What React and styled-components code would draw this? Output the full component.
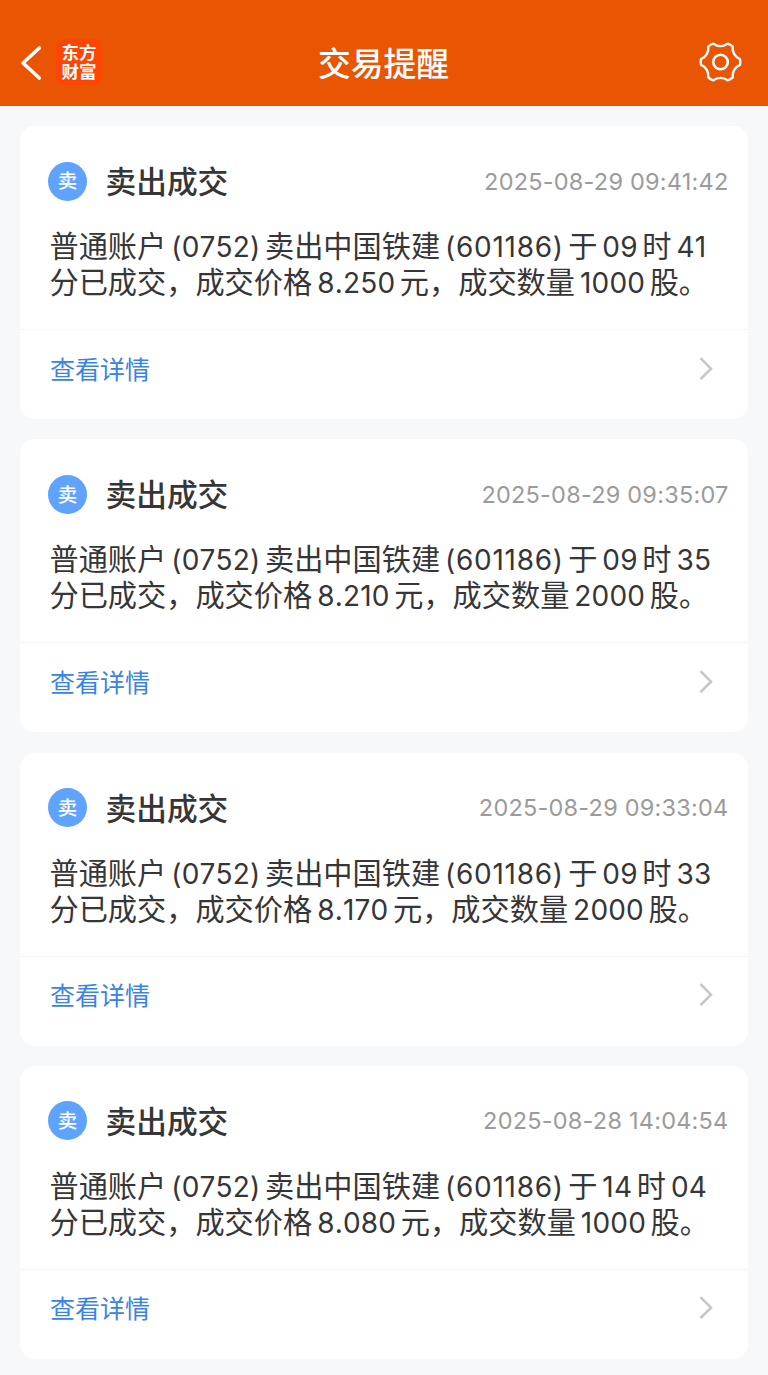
import styled, { createGlobalStyle } from 'styled-components'

const GlobalStyle = createGlobalStyle`
  * {
    box-sizing: border-box;
  }

  body {
    margin: 0;
    background: #f6f8fa;
    font-family: Inter, "Noto Sans CJK SC", sans-serif;
    color: #363636;
  }
`

const Page = styled.div`
  width: 768px;
  height: 1375px;
  overflow: hidden;
`

const Header = styled.header`
  display: grid;
  grid-template-columns: 1fr auto 1fr;
  align-items: center;
  height: 106px;
  padding: 18px 26px 0 20px;
  background: #ea5504;
  color: #fff;
`

const HeaderLeft = styled.div`
  display: flex;
  align-items: center;
  gap: 14px;
`

const Logo = styled.div`
  display: flex;
  flex-direction: column;
  align-items: center;
  justify-content: center;
  width: 46px;
  height: 46px;
  border-radius: 8px;
  background: #ff4403;
  font-size: 17.5px;
  font-weight: 700;
  line-height: 19.5px;
`

const HeaderTitle = styled.h1`
  margin: 0;
  padding: 4px 0 0 5px;
  font-size: 32.8px;
  font-weight: 500;
  line-height: 48px;
`

const IconButton = styled.button`
  display: flex;
  padding: ${(props) => props.$end ? '0' : '2px 0 0'};
  border: 0;
  background: none;
  color: inherit;
  justify-self: ${(props) => props.$end ? 'end' : 'start'};
`

const List = styled.main`
  display: flex;
  flex-direction: column;
  gap: 20.3px;
  padding: 20px;
`

const Card = styled.section`
  height: 293px;
  border-radius: 15px;
  background: #fff;
`

const CardBody = styled.div`
  height: 204px;
  padding: 35px 19.5px 0 28px;
  border-bottom: 1px solid #f6f6f7;
`

const CardHead = styled.div`
  display: flex;
  align-items: center;
  height: 40px;
`

const Badge = styled.span`
  display: flex;
  align-items: center;
  justify-content: center;
  width: 39px;
  height: 39px;
  padding-top: 2px;
  border-radius: 50%;
  background: #5fa3fc;
  color: #fff;
  font-size: 19.5px;
  font-weight: 500;
  line-height: 1;
`

const CardTitle = styled.h2`
  margin: 0 auto 0 18.5px;
  padding-top: 2px;
  font-size: 30.7px;
  font-weight: 500;
  line-height: 40px;
`

const Time = styled.time`
  color: #9b9b9b;
  font-size: 23.5px;
  letter-spacing: 0.22px;
`

const Message = styled.p`
  margin: 28px 0 0 1.5px;
  font-size: 29.2px;
  line-height: 35px;
  white-space: nowrap;
`

const Num = styled.span`
  margin: 0 4.5px 0 5px;
  font-size: 28px;
  letter-spacing: ${(props) => props.$spacing || '0.2px'};
  font-kerning: none;
  font-feature-settings: "calt" 0;
`

const CardLink = styled.a`
  display: flex;
  align-items: center;
  justify-content: space-between;
  height: 75px;
  padding: 0 35px 0 30px;
  color: #3a83e2;
  font-size: 25px;
`

const GEAR_PATH = [0, 60, 120, 180, 240, 300].map((deg, i) => {
  const at = (r, offset) => {
    const a = (deg + offset) * Math.PI / 180
    return `${(r * Math.cos(a)).toFixed(2)} ${(r * Math.sin(a)).toFixed(2)}`
  }
  return `${i === 0 ? 'M' : 'L'}${at(19.7, -8.5)} Q${at(20.2, 0)} ${at(19.7, 8.5)} C${at(15.3, 18.7)} ${at(15.3, 41.3)} ${at(19.7, 51.5)}`
}).join(' ') + 'Z'

const messages = [
  { time: '2025-08-29 09:41:42', hour: '09', minute: '41', price: '8.250', count: '1000' },
  { time: '2025-08-29 09:35:07', hour: '09', minute: '35', price: '8.210', count: '2000' },
  { time: '2025-08-29 09:33:04', hour: '09', minute: '33', price: '8.170', count: '2000' },
  { time: '2025-08-28 14:04:54', hour: '14', minute: '04', price: '8.080', count: '1000' },
]

function BackIcon() {
  return (
    <svg width="22" height="36" viewBox="0 0 22 36" fill="none">
      <path d="M19.3 3L3 18L19.3 33" stroke="#fff" strokeWidth="3.6" strokeLinecap="round" strokeLinejoin="round" />
    </svg>
  )
}

function GearIcon() {
  return (
    <svg width="44" height="44" viewBox="-22.5 -22 44 44" fill="none" stroke="#fff" strokeWidth="2.4" strokeLinejoin="round">
      <path d={GEAR_PATH} />
      <circle r="7.3" strokeWidth="2.6" />
    </svg>
  )
}

function ArrowIcon() {
  return (
    <svg width="14" height="24" viewBox="0 0 14 24" fill="none">
      <path d="M1.5 2.2L12 12.7L1.5 23.2" stroke="#c6c6c6" strokeWidth="2.5" />
    </svg>
  )
}

function TradeCard({ item }) {
  return (
    <Card>
      <CardBody>
        <CardHead>
          <Badge>卖</Badge>
          <CardTitle>卖出成交</CardTitle>
          <Time>{item.time}</Time>
        </CardHead>
        <Message>
          普通账户<Num>(0752)</Num>卖出中国铁建<Num $spacing="0.7px">(601186)</Num>于<Num>{item.hour}</Num>时<Num>{item.minute}</Num>
          <br />
          分已成交，成交价格<Num>{item.price}</Num>元，成交数量<Num>{item.count}</Num>股。
        </Message>
      </CardBody>
      <CardLink>
        查看详情
        <ArrowIcon />
      </CardLink>
    </Card>
  )
}

export default function App() {
  return (
    <Page>
      <GlobalStyle />
      <Header>
        <HeaderLeft>
          <IconButton aria-label="返回"><BackIcon /></IconButton>
          <Logo>
            <span>东方</span>
            <span>财富</span>
          </Logo>
        </HeaderLeft>
        <HeaderTitle>交易提醒</HeaderTitle>
        <IconButton $end aria-label="设置"><GearIcon /></IconButton>
      </Header>
      <List>
        {messages.map((item) => <TradeCard key={item.time} item={item} />)}
      </List>
    </Page>
  )
}
